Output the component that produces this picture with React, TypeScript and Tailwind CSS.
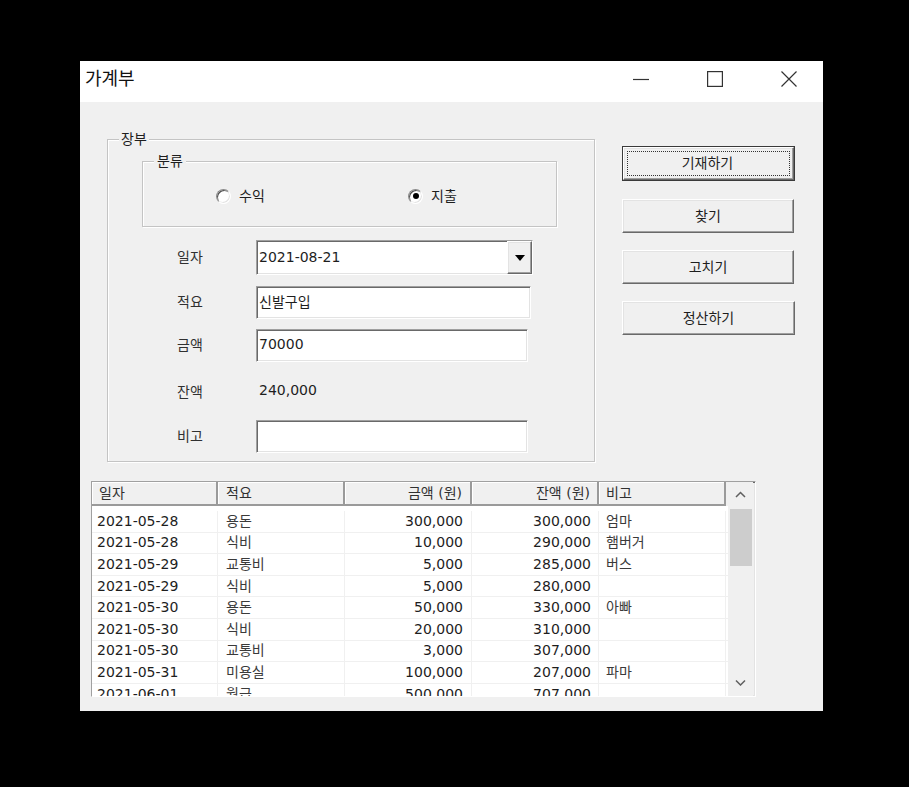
import React from "react";

const rows = [
  ["2021-05-28", "용돈", "300,000", "300,000", "엄마"],
  ["2021-05-28", "식비", "10,000", "290,000", "햄버거"],
  ["2021-05-29", "교통비", "5,000", "285,000", "버스"],
  ["2021-05-29", "식비", "5,000", "280,000", ""],
  ["2021-05-30", "용돈", "50,000", "330,000", "아빠"],
  ["2021-05-30", "식비", "20,000", "310,000", ""],
  ["2021-05-30", "교통비", "3,000", "307,000", ""],
  ["2021-05-31", "미용실", "100,000", "207,000", "파마"],
  ["2021-06-01", "월급", "500,000", "707,000", ""],
];

const sunken =
  "border border-t-[#a0a0a0] border-l-[#a0a0a0] border-r-white border-b-white shadow-[inset_1px_1px_0_#696969,inset_-1px_-1px_0_#e3e3e3]";
const raised =
  "border border-t-white border-l-white border-r-[#696969] border-b-[#696969] shadow-[inset_-1px_-1px_0_#a0a0a0,inset_1px_1px_0_#e3e3e3]";
const etched =
  "border border-[#c4c4c4] shadow-[inset_1px_1px_0_#ffffff,1px_1px_0_#ffffff]";

const Radio = ({ checked, label }: { checked?: boolean; label: string }) => (
  <div className="flex items-center gap-[8px]">
    <span className="w-[15px] h-[15px] rounded-full bg-white border border-t-[#8a8a8a] border-l-[#8a8a8a] border-r-white border-b-white shadow-[inset_1px_1px_0_#505050,inset_-1px_-1px_0_#e3e3e3] flex items-center justify-center">
      {checked && <span className="w-[6px] h-[6px] rounded-full bg-black" />}
    </span>
    <span>{label}</span>
  </div>
);

const Field = ({
  label,
  children,
  className,
}: {
  label: string;
  children?: React.ReactNode;
  className: string;
}) => (
  <div className={"flex items-center " + className}>
    <span className="ml-[35px] w-[79px] text-[#303030]">{label}</span>
    {children}
  </div>
);

const Button = ({ label, className }: { label: string; className: string }) => (
  <div className={"w-[172px] flex items-center justify-center bg-[#f0f0f0] " + raised + " " + className}>
    {label}
  </div>
);

const Chevron = ({ down }: { down?: boolean }) => (
  <svg width="11" height="7" viewBox="0 0 11 7">
    <path
      d={down ? "M1 1.5 L5.5 6 L10 1.5" : "M1 6 L5.5 1.5 L10 6"}
      fill="none"
      stroke="#606060"
      strokeWidth="1.5"
    />
  </svg>
);

const widths = ["w-[126px]", "w-[127px]", "w-[127px]", "w-[127px]", "w-[127px]"];
const aligns = ["pl-[5px]", "pl-[8px]", "justify-end pr-[8px]", "justify-end pr-[7px]", "pl-[7px]"];

export default function App() {
  return (
    <div className="w-full min-h-screen bg-black pt-[61px] pl-[80px] font-['DejaVu_Sans','Noto_Sans_CJK_KR',sans-serif] text-[14px] text-[#1e1e1e]">
      <div className="w-[743px] h-[650px] bg-[#f0f0f0] flex flex-col">
        {/* title bar */}
        <div className="h-[41px] shrink-0 bg-white flex items-center pb-[6px]">
          <span className="pl-[5px] text-[18px] text-[#111]">가계부</span>
          <div className="ml-auto flex items-center gap-[58px] pr-[26px]">
            <svg width="16" height="16" viewBox="0 0 16 16">
              <path d="M0 8.5 H16" stroke="#333" strokeWidth="1.2" />
            </svg>
            <svg width="16" height="16" viewBox="0 0 16 16">
              <rect x="0.6" y="0.6" width="14.8" height="14.8" fill="none" stroke="#333" strokeWidth="1.2" />
            </svg>
            <svg width="16" height="16" viewBox="0 0 16 16">
              <path d="M0.5 0.5 L15.5 15.5 M15.5 0.5 L0.5 15.5" stroke="#333" strokeWidth="1.2" />
            </svg>
          </div>
        </div>

        {/* top area */}
        <div className="flex items-start">
          <div className={"relative ml-[27px] mt-[37px] w-[488px] h-[323px] pl-[34px] pt-[21px] flex flex-col " + etched}>
            <span className="absolute left-[11px] -top-[11px] px-[2px] bg-[#f0f0f0] leading-[20px]">장부</span>

            <div className={"relative w-[415px] h-[66px] shrink-0 flex items-center pt-[4px] pl-[73px] " + etched}>
              <span className="absolute left-[11px] -top-[11px] px-[3px] bg-[#f0f0f0] leading-[20px]">분류</span>
              <div className="w-[192px]">
                <Radio label="수익" />
              </div>
              <Radio label="지출" checked />
            </div>

            <Field label="일자" className="mt-[13px] h-[35px]">
              <div className={"w-[277px] h-[35px] bg-white flex items-stretch " + sunken}>
                <span className="flex-1 flex items-center pl-[2px]">2021-08-21</span>
                <span className={"w-[25px] flex items-center justify-center bg-[#f0f0f0] " + raised}>
                  <svg width="10" height="6" viewBox="0 0 10 6">
                    <path d="M0 0 H10 L5 6 Z" fill="#000" />
                  </svg>
                </span>
              </div>
            </Field>
            <Field label="적요" className="mt-[11px] h-[33px]">
              <div className={"w-[275px] h-[33px] bg-white flex items-center pl-[2px] pb-[1px] " + sunken}>신발구입</div>
            </Field>
            <Field label="금액" className="mt-[10px] h-[33px]">
              <div className={"w-[272px] h-[33px] bg-white flex items-center pl-[2px] pb-[2px] " + sunken}>70000</div>
            </Field>
            <Field label="잔액" className="h-[58px] pt-[2px]">
              <span className="pl-[3px] pb-[4px]">240,000</span>
            </Field>
            <Field label="비고" className="h-[33px]">
              <div className={"w-[272px] h-[33px] bg-white " + sunken} />
            </Field>
          </div>

          <div className="ml-[27px] mt-[44px] flex flex-col">
            <div className="w-[173px] h-[35px] border border-[#3a3a3a] flex">
              <div className={"flex-1 p-[3px] flex bg-[#f0f0f0] " + raised}>
                <div className="flex-1 border border-dotted border-[#333] flex items-center justify-center pr-[2px]">
                  기재하기
                </div>
              </div>
            </div>
            <Button label="찾기" className="mt-[18px] h-[34px]" />
            <Button label="고치기" className="mt-[17px] h-[34px]" />
            <Button label="정산하기" className="mt-[17px] h-[34px] w-[173px]" />
          </div>
        </div>

        {/* list view */}
        <div className={"ml-[11px] mt-[19px] w-[665px] h-[216px] flex overflow-hidden " + sunken}>
          <div className="w-[636px] flex flex-col">
            <div className="h-[24px] shrink-0 flex bg-[#f0f0f0]">
              {["일자", "적요", "금액 (원)", "잔액 (원)", "비고"].map((h, i) => (
                <div
                  key={h}
                  className={
                    "h-full flex items-center border-r-2 border-b-2 border-[#9a9a9a] shadow-[inset_1px_1px_0_#ffffff] text-[#303030] " +
                    widths[i] +
                    " " +
                    (i === 0 ? "pl-[7px]" : aligns[i])
                  }
                >
                  {h}
                </div>
              ))}
              <div className="flex-1 h-full" />
            </div>
            <div className="flex-1 bg-white pt-[5px] overflow-hidden">
              {rows.map((r, ri) => (
                <div key={ri} className="h-[21.6px] flex border-b border-[#f0f0f0]">
                  {r.map((c, ci) => (
                    <div
                      key={ci}
                      className={
                        "h-full flex items-center border-r border-[#f0f0f0] " +
                        widths[ci] +
                        " " +
                        aligns[ci] +
                        (ci === 1 || ci === 4 ? " text-[#3a3a3a]" : "")
                      }
                    >
                      {c}
                    </div>
                  ))}
                </div>
              ))}
            </div>
          </div>
          <div className="w-[25px] flex flex-col bg-[#f0f0f0]">
            <div className="h-[25px] flex items-center justify-center">
              <Chevron />
            </div>
            <div className="mt-[2px] ml-[2px] mr-[1px] h-[57px] bg-[#cdcdcd]" />
            <div className="flex-1" />
            <div className="h-[25px] flex items-center justify-center pb-[2px]">
              <Chevron down />
            </div>
          </div>
        </div>
      </div>
    </div>
  );
}
